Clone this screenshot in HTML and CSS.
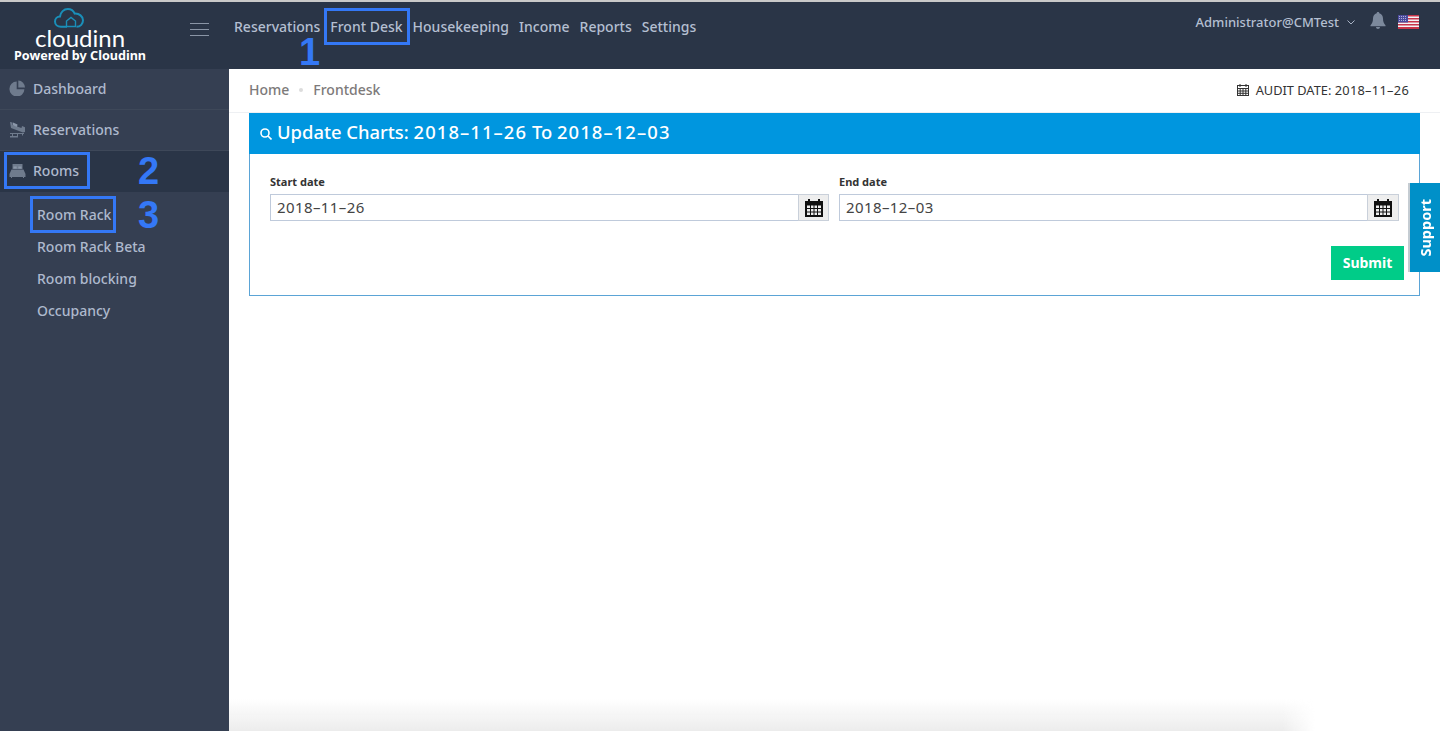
FILE: index.html
```html
<!DOCTYPE html>
<html lang="en">
<head>
    <meta charset="UTF-8">
    <meta name="viewport" content="width=device-width, initial-scale=1.0">
    <title>Cloudinn - Front Desk</title>
    <link rel="stylesheet" href="styles.css">
</head>
<body>
    <header class="topbar">
        <div class="logo">
            <svg class="logo-cloud" viewBox="0 0 30 20" width="30" height="20" fill="none" stroke="#1a8fb9" stroke-width="2">
                <path d="M13 18.800H7C3.500 18.800 1 16.400 1 13.500 1 10.700 3.200 8.600 6 8.500 6.600 4.200 9.800 1 13.800 1c3.200 0 5.700 1.800 6.900 4.600 4.500-.3 8.300 2.800 8.300 6.700 0 3.500-2.500 6.500-6.500 6.500"/>
                <path d="M12.500 18.500v-5.500l4.500-3.500 4.500 3.500v5.500z" stroke-width="1.400"/>
            </svg>
            <div class="logo-name">cloudinn</div>
            <div class="logo-powered">Powered by Cloudinn</div>
        </div>
        <div class="menu-toggle"><span></span><span></span><span></span></div>
        <nav class="main-nav">
            <a>Reservations</a>
            <a>Front Desk</a>
            <a>Housekeeping</a>
            <a>Income</a>
            <a>Reports</a>
            <a>Settings</a>
        </nav>
        <div class="user-area">
            <span class="user-name">Administrator@CMTest</span>
            <svg class="user-caret" viewBox="0 0 8 5" width="8" height="5" fill="none" stroke="#a9b4c6" stroke-width="1"><path d="M.5.5L4 4 7.500.5"/></svg>
            <svg class="user-bell" viewBox="0 0 16 17" width="16" height="17" fill="#7c899c">
                <path d="M8 0c.8 0 1.300.5 1.300 1.300C11.800 1.900 13 4 13 6.500c0 3.500 1 5.200 2.500 6.800v1H.5v-1C2 11.700 3 10 3 6.500 3 4 4.200 1.900 6.700 1.300 6.700.5 7.200 0 8 0zM6 15h4c0 1.100-.9 2-2 2s-2-.9-2-2z"/>
            </svg>
            <svg class="user-flag" viewBox="0 0 21 14" width="21" height="14">
                <rect width="21" height="14" fill="#f4f4f6"/>
                <path d="M0 0h21v1.500H0zM0 3h21v1.500H0zM0 6h21v1.500H0zM0 9h21v1.500H0zM0 12h21v2H0z" fill="#c8354a"/>
                <rect width="10" height="7.500" fill="#4a4a9c"/>
                <path d="M1 1.500h8M1 3.500h8M1 5.500h8" stroke="#c9cbe6" stroke-width=".8" stroke-dasharray="1 1"/>
            </svg>
        </div>
    </header>

    <div class="layout">
        <aside class="sidebar">
            <a class="side-item">
                <svg class="side-icon" viewBox="0 0 16 16" width="16" height="16" fill="#6f7b8d">
                    <path d="M7.200 1.500v7.700h7.700A7.500 7.500 0 1 1 7.200 1.500z"/>
                    <path d="M8.800.5a7 7 0 0 1 6.700 7H8.800z"/>
                </svg>
                Dashboard
            </a>
            <a class="side-item">
                <svg class="side-icon" viewBox="0 0 17 17" width="17" height="17" fill="#6f7b8d">
                    <path d="M1 1l2.500.5V4l9 3 .5-2 3 1.200V11l-2 .5-12-4.500z"/>
                    <path d="M4 1.500l4.500 2L8 6 3.800 4.300z" fill="#8b97a9"/>
                    <path d="M1 12h14v1H1zM1 15h8v1.500H1zM3 13h1v2H3zM8 13h1v2H8zM13 13h1v1.500h-1z"/>
                </svg>
                Reservations
            </a>
            <a class="side-item side-item-open">
                <svg class="side-icon" viewBox="0 0 16 14" width="16" height="14" fill="#6f7b8d">
                    <path d="M3 0h10v5H3z"/>
                    <path d="M2 5.500h12L16 10v3h-1.500v1h-1v-1h-11v1h-1v-1H0v-3z"/>
                    <path d="M4 2.500h3.200v2H4zM8.800 2.500H12v2H8.800z" fill="#8b97a9"/>
                </svg>
                Rooms
            </a>
            <ul class="side-sub">
                <li>Room Rack</li>
                <li>Room Rack Beta</li>
                <li>Room blocking</li>
                <li>Occupancy</li>
            </ul>
        </aside>

        <main class="content">
            <div class="crumbs">
                <span>Home</span>
                <i class="crumb-dot"></i>
                <span>Frontdesk</span>
                <div class="audit">
                    <svg viewBox="0 0 12 12" width="12" height="12" fill="none" stroke="#333" stroke-width="1">
                        <rect x=".5" y="1.500" width="11" height="10"/>
                        <path d="M.5 4.500h11M.5 7h11M.5 9.300h11M3.200 4.500v7M6 4.500v7M8.800 4.500v7M3 0v3M9 0v3"/>
                    </svg>
                    <span>AUDIT DATE: <span class="date-text">2018–11–26</span></span>
                </div>
            </div>

            <section class="panel">
                <h2 class="panel-title">
                    <svg viewBox="0 0 12 12" width="12" height="12" fill="none" stroke="#fff" stroke-width="1.600"><circle cx="5" cy="5" r="4"/><path d="M8 8l3.500 3.500"/></svg>
                    <span>Update Charts: <span class="date-text">2018–11–26</span> To <span class="date-text">2018–12–03</span></span>
                </h2>
                <form class="panel-body">
                    <div class="date-row">
                        <div class="form-group">
                            <label>Start date</label>
                            <div class="date-input">
                                <input type="text" value="2018–11–26">
                                <span class="date-addon">
                                    <svg viewBox="0 0 18 19" width="18" height="19">
                                        <path d="M0 3h3V1h2v2h8V1h2v2h3v16H0z" fill="#111"/>
                                        <path d="M2 7.500h3v2.500H2zM6 7.500h2.500v2.500H6zM9.500 7.500H12v2.500H9.500zM13 7.500h3v2.500h-3zM2 11h3v2.500H2zM6 11h2.500v2.500H6zM9.500 11H12v2.500H9.500zM13 11h3v2.500h-3zM2 14.500h3V17H2zM6 14.500h2.500V17H6zM9.500 14.500H12V17H9.500zM13 14.500h3V17h-3z" fill="#eee"/>
                                    </svg>
                                </span>
                            </div>
                        </div>
                        <div class="form-group">
                            <label>End date</label>
                            <div class="date-input">
                                <input type="text" value="2018–12–03">
                                <span class="date-addon">
                                    <svg viewBox="0 0 18 19" width="18" height="19">
                                        <path d="M0 3h3V1h2v2h8V1h2v2h3v16H0z" fill="#111"/>
                                        <path d="M2 7.500h3v2.500H2zM6 7.500h2.500v2.500H6zM9.500 7.500H12v2.500H9.500zM13 7.500h3v2.500h-3zM2 11h3v2.500H2zM6 11h2.500v2.500H6zM9.500 11H12v2.500H9.500zM13 11h3v2.500h-3zM2 14.500h3V17H2zM6 14.500h2.500V17H6zM9.500 14.500H12V17H9.500zM13 14.500h3V17h-3z" fill="#eee"/>
                                    </svg>
                                </span>
                            </div>
                        </div>
                    </div>
                    <div class="form-actions">
                        <button type="button">Submit</button>
                    </div>
                </form>
            </section>

            <div class="bottom-shade"></div>
        </main>
    </div>

    <div class="support-tab"><span>Support</span></div>

    <!-- tutorial markers drawn over the screen -->
    <div class="mark mark-desk"></div>
    <div class="mark mark-rooms"></div>
    <div class="mark mark-rack"></div>
    <div class="mark-num num-1">1</div>
    <div class="mark-num num-2">2</div>
    <div class="mark-num num-3">3</div>
</body>
</html>
```

FILE: styles.css
```css
:root {
    --top-dark: #2a3547;
    --side-bg: #353f52;
    --side-text: #aeb9cd;
    --mark-blue: #3478f6;
}

* {
    margin: 0;
    padding: 0;
    box-sizing: border-box;
    font-family: 'Noto Sans', 'Open Sans', sans-serif;
}

body {
    position: relative;
    height: 731px;
    overflow: hidden;
    background-color: white;
    color: #333;
}

.topbar {
    display: flex;
    height: 69px;
    background-color: var(--top-dark);
    border-top: 2px solid #c9c9c9;
}

.logo {
    position: relative;
    flex: 0 0 190px;
    display: flex;
    flex-direction: column;
    padding: 6px 0 0 14px;
}

.logo-cloud {
    margin-left: 40px;
}

.logo-name {
    margin: 0 0 0 21px;
    font-family: 'Lato', sans-serif;
    font-size: 24px;
    line-height: 20px;
    font-weight: 400;
    color: white;
}

.logo-powered {
    margin-top: 1px;
    font-size: 12.600px;
    line-height: 14px;
    font-weight: 700;
    color: white;
}

.menu-toggle {
    flex: 0 0 44px;
    display: flex;
    flex-direction: column;
    gap: 5px;
    padding-top: 21px;
}

.menu-toggle span {
    width: 19px;
    height: 1px;
    background-color: #8a95a6;
}

.main-nav {
    display: flex;
    gap: 10px;
    padding-top: 15px;
}

.main-nav a {
    font-size: 14px;
    line-height: 20px;
    font-weight: 500;
    color: #b4bfd1;
}

.user-area {
    margin-left: auto;
    display: flex;
    align-items: flex-start;
    padding: 11px 21px 0 0;
}

.user-name {
    font-size: 13px;
    line-height: 18px;
    font-weight: 500;
    color: #b4bfd1;
}

.user-caret {
    margin: 7px 0 0 8px;
}

.user-bell {
    margin: -1px 0 0 15px;
}

.user-flag {
    margin: 2px 0 0 12px;
}

.layout {
    display: flex;
    height: 662px;
}

.sidebar {
    flex: 0 0 229px;
    background-color: var(--side-bg);
}

.side-item {
    display: flex;
    align-items: center;
    height: 41px;
    padding: 0 0 2px 9px;
    border-bottom: 1px solid #3e4859;
    font-size: 14px;
    font-weight: 500;
    color: var(--side-text);
}

.side-icon {
    flex: 0 0 17px;
    margin-right: 7px;
}

.side-item-open {
    background-color: var(--top-dark);
    border-bottom: none;
}

.side-sub {
    list-style: none;
    padding: 7px 0 0 37px;
}

.side-sub li {
    height: 32px;
    font-size: 14px;
    line-height: 32px;
    font-weight: 500;
    color: var(--side-text);
}

.content {
    flex: 1;
    display: flex;
    flex-direction: column;
    min-width: 0;
}

.crumbs {
    display: flex;
    align-items: center;
    height: 44px;
    padding: 0 31px 2px 20px;
    border-bottom: 1px solid #eef0f3;
    font-size: 14px;
    font-weight: 500;
    color: #7d7a7a;
}

.crumb-dot {
    width: 4px;
    height: 4px;
    margin: 0 10px;
    border-radius: 50%;
    background-color: #dcdcdc;
}

.audit {
    margin-left: auto;
    display: flex;
    align-items: center;
    gap: 7px;
    font-size: 12.800px;
    font-weight: 400;
    color: #333;
}

.date-text {
    letter-spacing: .3px;
}

.panel {
    margin: 0 20px;
    border: 1px solid #5ba4d6;
    border-top: none;
}

.panel-title {
    display: flex;
    align-items: center;
    gap: 5px;
    height: 41px;
    padding: 0 0 4px 11px;
    margin: 0 -1px;
    background-color: #0096df;
    font-size: 18.400px;
    font-weight: 500;
    color: white;
}

.panel-title svg {
    margin-top: 5px;
}

.panel-title .date-text {
    letter-spacing: 1.100px;
}

.panel-body {
    padding: 20px 15px 15px 20px;
}

.date-row {
    display: grid;
    grid-template-columns: 559px 560px;
    gap: 10px;
}

.form-group:last-child .date-addon {
    flex-basis: 32px;
}

label {
    display: block;
    font-size: 11px;
    line-height: 16px;
    font-weight: 700;
    color: #333;
    margin-bottom: 4px;
}

.date-input {
    display: flex;
    height: 27px;
}

.date-input input {
    flex: 1;
    min-width: 0;
    padding: 0 6px 1px;
    border: 1px solid #bfcadb;
    border-right: none;
    font-size: 15px;
    letter-spacing: .4px;
    color: #444;
    outline: none;
}

.date-addon {
    flex: 0 0 31px;
    display: flex;
    align-items: center;
    justify-content: center;
    background-color: #eee;
    border: 1px solid #c9d0da;
}

.form-actions {
    display: flex;
    justify-content: flex-end;
    margin-top: 25px;
}

button {
    width: 73px;
    height: 34px;
    padding-bottom: 2px;
    background-color: #00cc88;
    color: white;
    border: none;
    font-size: 14px;
    font-weight: 700;
}

.bottom-shade {
    margin: auto 125px 0 0;
    height: 32px;
    background: linear-gradient(to bottom, rgba(235, 235, 235, 0), #ececec);
    mask-image: linear-gradient(to right, black 97%, transparent);
}

.support-tab {
    position: absolute;
    top: 183px;
    right: 0;
    width: 32px;
    height: 89px;
    display: flex;
    align-items: center;
    justify-content: center;
    background-color: #0090c8;
    border-left: 2px solid #c5ccd2;
}

.support-tab span {
    writing-mode: vertical-rl;
    transform: rotate(180deg);
    font-size: 14.500px;
    font-weight: 700;
    color: white;
}

.mark {
    position: absolute;
    border: 3px solid var(--mark-blue);
}

.mark-desk {
    left: 324px;
    top: 8px;
    width: 86px;
    height: 37px;
}

.mark-rooms {
    left: 4px;
    top: 152px;
    width: 86px;
    height: 37px;
}

.mark-rack {
    left: 30px;
    top: 196px;
    width: 86px;
    height: 37px;
}

.mark-num {
    position: absolute;
    font-family: 'Liberation Sans', sans-serif;
    font-size: 38px;
    line-height: 28px;
    font-weight: 700;
    color: var(--mark-blue);
}

.num-1 {
    left: 299px;
    top: 38px;
}

.num-2 {
    left: 138px;
    top: 157px;
}

.num-3 {
    left: 138px;
    top: 201px;
}
```
